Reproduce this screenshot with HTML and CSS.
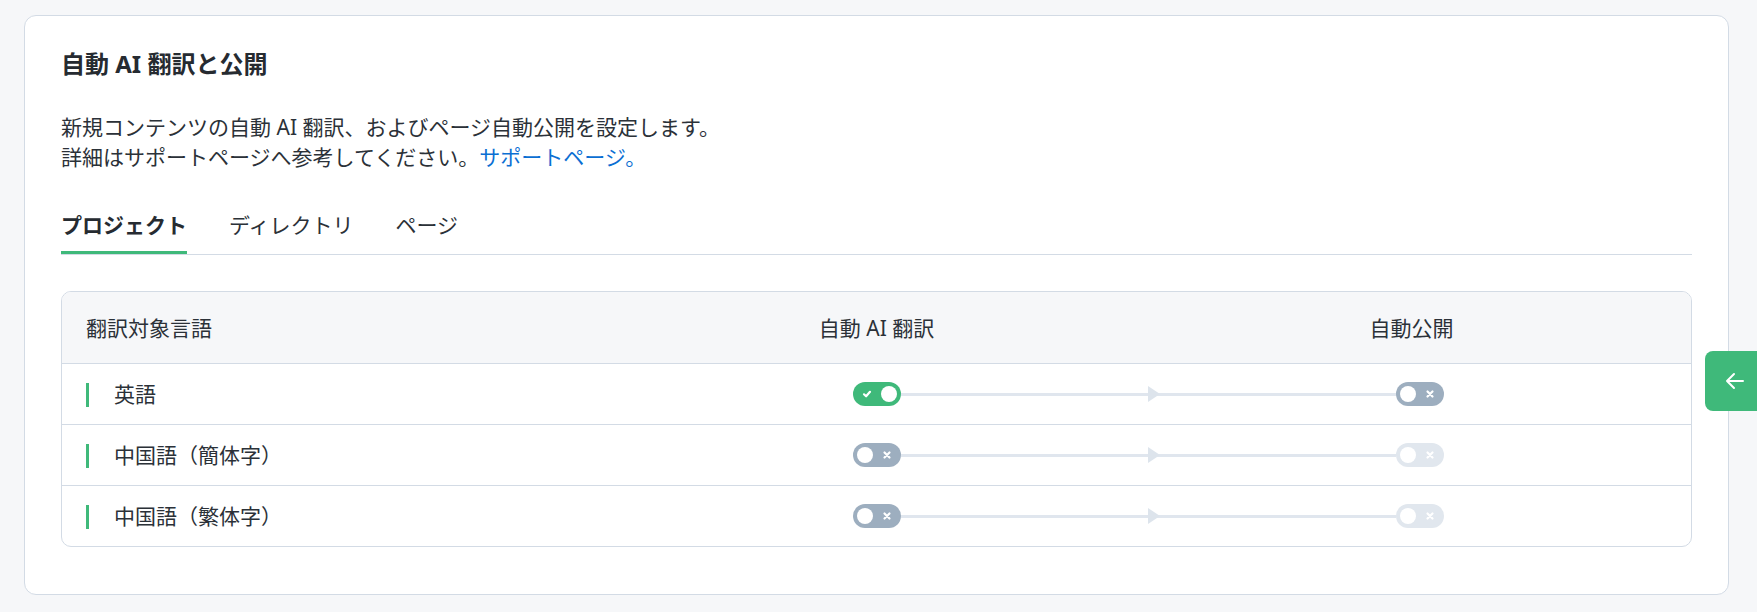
FILE: index.html
```html
<!DOCTYPE html>
<html lang="ja">
<head>
<meta charset="utf-8">
<title>自動 AI 翻訳と公開</title>
<link rel="stylesheet" href="styles.css">
</head>
<body>
<div class="page">
  <section class="card">
    <h1 class="title">自動 AI 翻訳と公開</h1>
    <p class="desc">新規コンテンツの自動 AI 翻訳、およびページ自動公開を設定します。<br>詳細はサポートページへ参考してください。<a class="link" href="#">サポートページ。</a></p>
    <nav class="tabs">
      <span class="tab active">プロジェクト</span>
      <span class="tab">ディレクトリ</span>
      <span class="tab">ページ</span>
    </nav>
    <div class="table">
      <div class="thead">
        <div class="th">翻訳対象言語</div>
        <div class="th center">自動 AI 翻訳</div>
        <div class="th center">自動公開</div>
      </div>
      <div class="row">
        <div class="lang"><span class="bar"></span>英語</div>
        <div class="flow">
          <span class="toggle on"><svg class="ico" viewBox="0 0 10 10"><path d="M2 5.3 4.1 7.3 8 2.8"/></svg><span class="knob"></span></span>
          <span class="line"><span class="arrow"></span></span>
          <span class="toggle off"><span class="knob"></span><svg class="ico" viewBox="0 0 10 10"><path d="M2.5 2.5 7.5 7.5M7.5 2.5 2.5 7.5"/></svg></span>
        </div>
      </div>
      <div class="row">
        <div class="lang"><span class="bar"></span>中国語（簡体字）</div>
        <div class="flow">
          <span class="toggle off"><span class="knob"></span><svg class="ico" viewBox="0 0 10 10"><path d="M2.5 2.5 7.5 7.5M7.5 2.5 2.5 7.5"/></svg></span>
          <span class="line"><span class="arrow"></span></span>
          <span class="toggle disabled"><span class="knob"></span><svg class="ico" viewBox="0 0 10 10"><path d="M2.5 2.5 7.5 7.5M7.5 2.5 2.5 7.5"/></svg></span>
        </div>
      </div>
      <div class="row">
        <div class="lang"><span class="bar"></span>中国語（繁体字）</div>
        <div class="flow">
          <span class="toggle off"><span class="knob"></span><svg class="ico" viewBox="0 0 10 10"><path d="M2.5 2.5 7.5 7.5M7.5 2.5 2.5 7.5"/></svg></span>
          <span class="line"><span class="arrow"></span></span>
          <span class="toggle disabled"><span class="knob"></span><svg class="ico" viewBox="0 0 10 10"><path d="M2.5 2.5 7.5 7.5M7.5 2.5 2.5 7.5"/></svg></span>
        </div>
      </div>
    </div>
  </section>
</div>
<button class="side-btn" type="button" aria-label="戻る">
  <svg viewBox="0 0 24 24"><path d="M20 12H4M11 19l-7-7 7-7"/></svg>
</button>
</body>
</html>
```
FILE: styles.css
```css
* { box-sizing: border-box; }
html, body { margin: 0; padding: 0; }
body {
  background: #f6f7f9;
  font-family: "Noto Sans", "Noto Sans CJK JP", sans-serif;
  color: #2b3138;
  font-size: 21px;
}
.page {
  padding: 15px 28px 16px 24px;
}
.card {
  background: #fff;
  border: 1px solid #d3dbe5;
  border-radius: 12px;
  padding: 32px 36px 47px;
}
.title {
  margin: 0;
  font-size: 24px;
  line-height: 32px;
  font-weight: 700;
  color: #262b31;
}
.desc {
  margin: 32px 0 0;
  font-size: 21px;
  line-height: 30px;
}
.link {
  color: #0b6fd3;
  text-decoration: none;
}
.tabs {
  margin-top: 38px;
  display: flex;
  gap: 42px;
  border-bottom: 1px solid #d3dbe5;
}
.tab {
  font-size: 21px;
  line-height: 30px;
  padding-bottom: 11px;
  border-bottom: 3px solid transparent;
}
.tab.active {
  font-weight: 700;
  border-bottom-color: #3fb97a;
  color: #262b31;
}
.table {
  margin-top: 36px;
  border: 1px solid #d3dbe5;
  border-radius: 10px;
  overflow: hidden;
}
.thead {
  display: grid;
  grid-template-columns: 1fr 1fr 1fr;
  height: 72px;
  align-items: center;
  padding: 0 12px;
  background: #f6f7f9;
  border-bottom: 1px solid #d3dbe5;
}
.th {
  padding: 0 12px;
  line-height: 30px;
}
.th.center { text-align: center; }
.row {
  display: grid;
  grid-template-columns: 1fr 1fr 1fr;
  height: 61px;
  align-items: center;
  border-bottom: 1px solid #d3dbe5;
}
.row:last-child { border-bottom: 0; height: 60px; }
.lang {
  display: flex;
  align-items: center;
  padding-left: 24px;
  line-height: 30px;
}
.bar {
  width: 3px;
  height: 24px;
  background: #3fb97a;
  margin-right: 25px;
  margin-top: 2px;
}
.flow {
  grid-column: 2 / 4;
  display: flex;
  align-items: center;
  padding: 0 calc(25% - 24px);
}
.line {
  position: relative;
  flex: 1;
  height: 3px;
  background: #e0e6ee;
}
.arrow {
  position: absolute;
  left: 50%;
  top: -7px;
  width: 0;
  height: 0;
  border-left: 12px solid #dde4ec;
  border-top: 8.5px solid transparent;
  border-bottom: 8.5px solid transparent;
}
.toggle {
  flex: none;
  width: 48px;
  height: 24px;
  border-radius: 12px;
  display: flex;
  align-items: center;
  justify-content: space-between;
  padding: 0 4px;
}
.toggle.on { background: #3fb97a; padding-left: 9px; }
.toggle.off { background: #9daebf; padding-right: 9px; }
.toggle.disabled { background: #e1e7ee; padding-right: 9px; }
.knob {
  width: 16px;
  height: 16px;
  border-radius: 50%;
  background: #fff;
}
.ico {
  width: 10px;
  height: 10px;
  fill: none;
  stroke: #fff;
  stroke-width: 2.2;
  stroke-linecap: round;
  stroke-linejoin: round;
}
.side-btn {
  position: fixed;
  right: -8px;
  top: 351px;
  width: 60px;
  height: 60px;
  border: 0;
  padding: 0;
  border-radius: 8px;
  background: #3fb97a;
  display: flex;
  align-items: center;
  justify-content: center;
}
.side-btn svg {
  width: 24px;
  height: 24px;
  fill: none;
  stroke: #fff;
  stroke-width: 2;
  stroke-linecap: round;
  stroke-linejoin: round;
}
```
